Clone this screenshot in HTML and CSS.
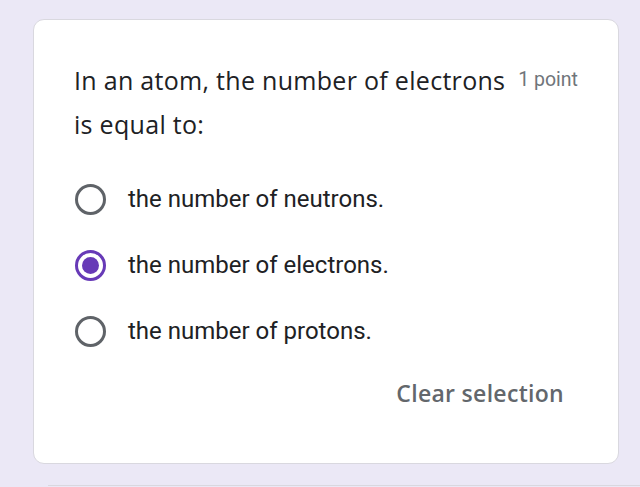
FILE: index.html
```html
<!DOCTYPE html>
<html lang="en">
<head>
<meta charset="utf-8">
<link rel="stylesheet" href="styles.css">
</head>
<body>
<div class="card">
  <div class="question">
    <div class="q-text">In an atom, the number of electrons is equal to:</div>
    <div class="points">1 point</div>
  </div>
  <div class="options">
    <label class="option"><span class="radio"></span><span class="opt-text">the number of neutrons.</span></label>
    <label class="option"><span class="radio checked"></span><span class="opt-text">the number of electrons.</span></label>
    <label class="option"><span class="radio"></span><span class="opt-text">the number of protons.</span></label>
  </div>
  <div class="actions"><span class="clear">Clear selection</span></div>
</div>
<div class="next-card"></div>
</body>
</html>
```
FILE: styles.css
```css
html, body {
  margin: 0;
  padding: 0;
  background: #ebe8f6;
}
body {
  height: 487px;
  overflow: hidden;
  box-sizing: border-box;
  padding-top: 19px;
  font-family: Roboto, "Liberation Sans", sans-serif;
  color: #202124;
}
.card {
  margin-left: 33px;
  width: 586px;
  height: 445px;
  box-sizing: border-box;
  background: #fff;
  border: 1px solid #d9d8df;
  border-radius: 11px;
  padding: 38px 0 0 0;
}
.question {
  display: flex;
  align-items: flex-start;
  padding: 0 40px 0 40px;
}
.q-text {
  flex: 1;
  font-family: "Open Sans", Roboto, sans-serif;
  font-size: 25px;
  line-height: 44px;
  letter-spacing: 0.3px;
  color: #202124;
}
.points {
  font-size: 19.5px;
  color: #70757a;
  line-height: 44px;
  margin-left: 10px;
  white-space: nowrap;
}
.options {
  margin-top: 20px;
  padding-left: 41px;
}
.option {
  display: flex;
  align-items: center;
  height: 66px;
}
.radio {
  width: 25px;
  height: 25px;
  border: 3px solid #5f6368;
  border-radius: 50%;
  flex: none;
  position: relative;
}
.radio.checked {
  border-color: #673ab7;
}
.radio.checked::after {
  content: "";
  position: absolute;
  left: 4px;
  top: 4px;
  width: 17px;
  height: 17px;
  border-radius: 50%;
  background: #673ab7;
}
.opt-text {
  margin-left: 22px;
  font-size: 24px;
}
.actions {
  display: flex;
  justify-content: flex-end;
  padding-right: 54px;
  margin-top: 14px;
}
.clear {
  font-family: "Open Sans", Roboto, sans-serif;
  font-weight: 600;
  font-size: 23px;
  line-height: 30px;
  color: #63676c;
  letter-spacing: 0.3px;
}
.next-card {
  margin: 21px 0 0 48px;
  height: 2px;
  border-top: 1px solid #d9d8df;
}
```
